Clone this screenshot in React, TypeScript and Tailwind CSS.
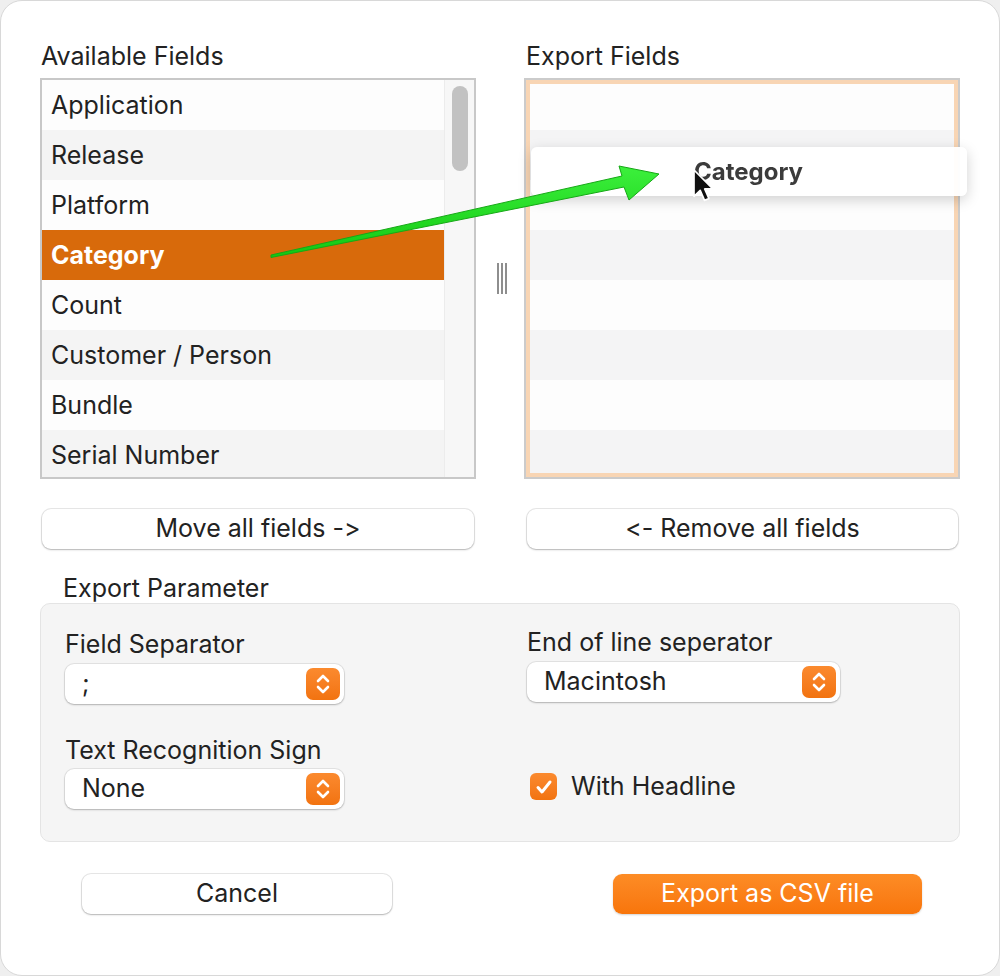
import React from 'react';

const FIELDS = [
  'Application',
  'Release',
  'Platform',
  'Category',
  'Count',
  'Customer / Person',
  'Bundle',
  'Serial Number',
];

const Stepper = () => (
  <div className="flex h-[32px] w-[34px] items-center justify-center rounded-[7px] bg-gradient-to-b from-[#fb8a2e] to-[#f2730f]">
    <svg width="16" height="22" viewBox="0 0 16 22" fill="none" stroke="white" strokeWidth="2.6" strokeLinecap="round" strokeLinejoin="round">
      <path d="M3 8 L8 3 L13 8" />
      <path d="M3 14 L8 19 L13 14" />
    </svg>
  </div>
);

const Select = ({ value, className }: { value: string; className: string }) => (
  <div
    className={`flex h-[40px] items-center justify-between rounded-[9px] bg-white pl-[17px] pr-[4px] shadow-[0_0_0_1px_rgba(0,0,0,0.07),0_1px_2px_rgba(0,0,0,0.22)] ${className}`}
  >
    <span className="text-[25px] text-[#222]">{value}</span>
    <Stepper />
  </div>
);

const PlainButton = ({ label, className }: { label: string; className: string }) => (
  <button
    className={`h-[40px] rounded-[9px] bg-white text-[25px] text-[#222] shadow-[0_0_0_1px_rgba(0,0,0,0.09),0_1px_2px_rgba(0,0,0,0.22)] ${className}`}
  >
    {label}
  </button>
);

export default function App() {
  return (
    <div
      className="min-h-screen bg-[#efefef] [font-feature-settings:'calt'_0,'liga'_0]"
      style={{ fontFamily: 'Inter, "Noto Sans", sans-serif' }}
    >
      <div className="relative h-[976px] w-[1000px] overflow-hidden rounded-[22px] border border-[#d8d8d8] bg-white px-[39px] pt-[40px] text-[#222]">
        {/* Field lists */}
        <div className="grid grid-cols-[436px_436px] gap-x-[48px]">
          <div>
            <div className="h-[30px] pl-[1px] text-[25px] leading-[30px]">Available Fields</div>
            <div className="mt-[7px] flex h-[401px] overflow-hidden border-2 border-[#c8c8c8] bg-[#fafafa]">
              <div className="w-[402px]">
                {FIELDS.map((f, i) => (
                  <div
                    key={f}
                    className={`flex h-[50px] items-center pl-[9px] pt-[1px] text-[25px] ${
                      f === 'Category'
                        ? 'bg-[#d86a0b] font-bold text-white'
                        : i % 2 === 0
                        ? 'bg-[#fdfdfd]'
                        : 'bg-[#f4f4f4]'
                    }`}
                  >
                    {f}
                  </div>
                ))}
              </div>
              <div className="flex-1 border-l border-[#ececec] bg-[#f7f7f7] pl-[7px] pt-[6px]">
                <div className="h-[85px] w-[16px] rounded-full bg-[#c2c2c2]" />
              </div>
            </div>
            <PlainButton label="Move all fields ->" className="ml-[2px] mt-[30px] w-[432px]" />
          </div>

          <div>
            <div className="h-[30px] pl-[2px] text-[25px] leading-[30px]">Export Fields</div>
            <div className="relative mt-[7px] h-[401px] overflow-hidden border-2 border-[#cbcbcb] bg-[#fdfdfd]">
              {[0, 1, 2, 3, 4, 5, 6, 7].map((i) => (
                <div key={i} className={`h-[50px] ${i % 2 === 0 ? 'bg-[#fdfdfd]' : 'bg-[#f4f4f5]'}`} />
              ))}
              <div className="pointer-events-none absolute inset-0 border-[4px] border-[#f8d5b4]" />
            </div>
            <PlainButton label="<- Remove all fields" className="ml-[3px] mt-[30px] w-[431px]" />
          </div>
        </div>

        {/* Export parameter group */}
        <div className="mt-[25px] h-[28px] pl-[23px] text-[25px] leading-[28px]">Export Parameter</div>
        <div className="mt-[1px] grid h-[239px] grid-cols-[462px_1fr] rounded-[10px] border border-[#e4e4e4] bg-[#f5f5f5] pl-[24px] pt-[26px]">
          <div>
            <div className="h-[28px] text-[25px] leading-[28px]">Field Separator</div>
            <Select value=";" className="mt-[6px] w-[279px]" />
            <div className="mt-[32px] h-[28px] text-[25px] leading-[28px]">Text Recognition Sign</div>
            <Select value="None" className="mt-[5px] w-[279px]" />
          </div>
          <div className="-mt-[2px]">
            <div className="h-[28px] text-[25px] leading-[28px]">End of line seperator</div>
            <Select value="Macintosh" className="mt-[6px] w-[313px]" />
            <div className="mt-[66px] flex items-center gap-[14px] pl-[3px]">
              <div className="flex h-[27px] w-[27px] items-center justify-center rounded-[6px] bg-gradient-to-b from-[#fb8a2e] to-[#f2730f]">
                <svg width="18" height="16" viewBox="0 0 18 16" fill="none" stroke="white" strokeWidth="3" strokeLinecap="round" strokeLinejoin="round">
                  <path d="M3 8.5 L7 13 L15 3" />
                </svg>
              </div>
              <span className="text-[25px]">With Headline</span>
            </div>
          </div>
        </div>

        {/* Bottom buttons */}
        <div className="mt-[32px] flex justify-between pl-[42px] pr-[38px]">
          <PlainButton label="Cancel" className="w-[310px]" />
          <button className="h-[40px] w-[309px] rounded-[9px] bg-gradient-to-b from-[#fd8c25] to-[#f8750a] text-[25px] text-white shadow-[0_1px_2px_rgba(0,0,0,0.18)]">
            Export as CSV file
          </button>
        </div>

        {/* splitter grip */}
        <div className="absolute left-[496px] top-[262px] flex gap-[2px]">
          <div className="h-[31px] w-[2px] bg-[#8e8e8e]" />
          <div className="h-[31px] w-[2px] bg-[#8e8e8e]" />
          <div className="h-[31px] w-[2px] bg-[#8e8e8e]" />
        </div>

        {/* drag ghost */}
        <div className="absolute left-[530px] top-[146px] flex h-[49px] w-[436px] items-center rounded-[6px] bg-white/95 pl-[163px] shadow-[0_4px_14px_rgba(0,0,0,0.18)]">
          <span className="text-[24px] font-bold text-[#3b3b3b] blur-[0.6px]">Category</span>
        </div>

        {/* arrow + cursor */}
        <svg className="pointer-events-none absolute left-0 top-0" width="1000" height="976" viewBox="0 0 1000 976">
          <defs>
            <linearGradient id="g" x1="0" y1="0" x2="0" y2="1">
              <stop offset="0" stopColor="#3cf03c" />
              <stop offset="1" stopColor="#12c812" />
            </linearGradient>
          </defs>
          <polygon
            points="270,254 621,175 618,165 658,173 628,199 623,186 270,256.5"
            fill="url(#g)"
            stroke="#17a817"
            strokeWidth="1"
            strokeLinejoin="round"
          />
          <g transform="translate(693,169) scale(1.55)">
            <path d="M0 0 L0 17 L4 13.2 L6.8 19.6 L9.6 18.4 L6.9 12.2 L12 12 Z" fill="#111" stroke="white" strokeWidth="1.1" strokeLinejoin="round" />
          </g>
        </svg>
      </div>
    </div>
  );
}
